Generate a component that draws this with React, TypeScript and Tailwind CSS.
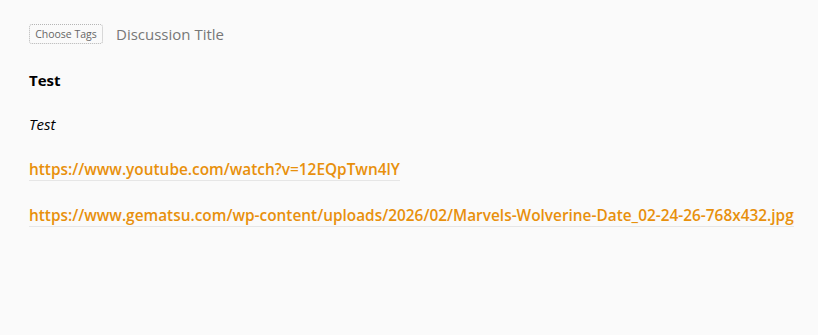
import React from 'react';

const links = [
  'https://www.youtube.com/watch?v=12EQpTwn4lY',
  'https://www.gematsu.com/wp-content/uploads/2026/02/Marvels-Wolverine-Date_02-24-26-768x432.jpg',
];

export default function App() {
  return (
    <div className="w-[818px] h-[335px] bg-[#fafafa] px-[29px] pt-[24px] font-['Open_Sans',sans-serif]">
      <div className="flex items-center gap-[13px]">
        <button className="h-[20px] w-[74px] rounded-[3px] border border-dotted border-[#b5b5b5] text-[10.5px] text-[#666] leading-none">
          Choose Tags
        </button>
        <span className="text-[15px] text-[#777] leading-[20px]">Discussion Title</span>
      </div>
      <div className="mt-[25px] flex flex-col gap-[21px] text-[15px] text-black">
        <p className="font-bold leading-[23px]">Test</p>
        <p className="italic leading-[23px]">Test</p>
        {links.map((href) => (
          <p key={href} className="leading-[24px] whitespace-nowrap">
            <a href={href} className="text-[15.4px] font-semibold text-[#e8900c] border-b border-[#e6e6e6]">
              {href}
            </a>
          </p>
        ))}
      </div>
    </div>
  );
}
